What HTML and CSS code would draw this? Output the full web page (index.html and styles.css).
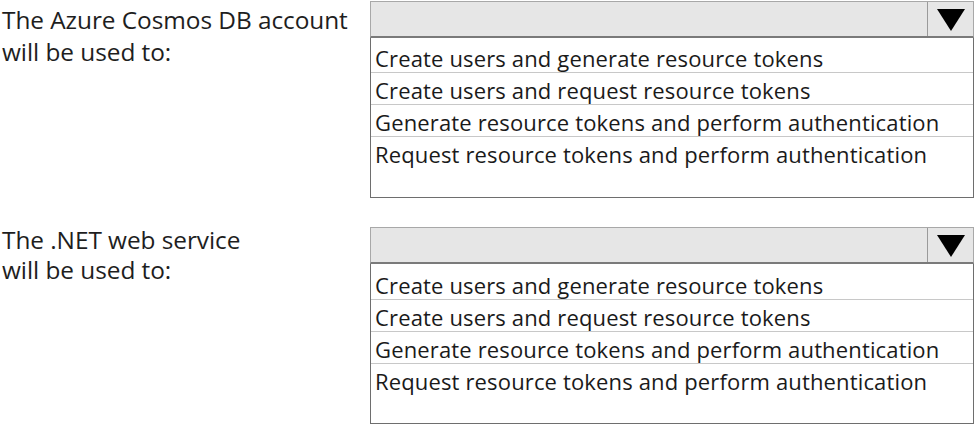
FILE: index.html
```html
<!DOCTYPE html>
<html>
<head>
<meta charset="utf-8">
<link rel="stylesheet" href="styles.css">
</head>
<body>
<div class="page">
  <section class="item first">
    <div class="label">The Azure Cosmos DB account<br>will be used to:</div>
    <div class="dropdown">
      <div class="head">
        <div class="value"></div>
        <div class="btn"><svg width="28" height="22" viewBox="0 0 28 22"><polygon points="0,0 28,0 14,22" fill="#000"/></svg></div>
      </div>
      <ul class="list">
        <li>Create users and generate resource tokens</li>
        <li>Create users and request resource tokens</li>
        <li>Generate resource tokens and perform authentication</li>
        <li class="last">Request resource tokens and perform authentication</li>
      </ul>
    </div>
  </section>
  <section class="item second">
    <div class="label">The .NET web service<br>will be used to:</div>
    <div class="dropdown">
      <div class="head">
        <div class="value"></div>
        <div class="btn"><svg width="28" height="22" viewBox="0 0 28 22"><polygon points="0,0 28,0 14,22" fill="#000"/></svg></div>
      </div>
      <ul class="list">
        <li>Create users and generate resource tokens</li>
        <li>Create users and request resource tokens</li>
        <li>Generate resource tokens and perform authentication</li>
        <li class="last">Request resource tokens and perform authentication</li>
      </ul>
    </div>
  </section>
</div>
</body>
</html>
```

FILE: styles.css
```css
* { box-sizing: border-box; }
html, body { margin: 0; padding: 0; background: #fff; }
body {
  font-family: "Open Sans", "Noto Sans", sans-serif;
  color: #222;
  width: 975px;
  height: 426px;
  overflow: hidden;
}
.page { display: flex; flex-direction: column; }
.item { display: flex; }
.first { padding-top: 1px; }
.second { margin-top: 29px; }
.label {
  width: 370px;
  padding-left: 2px;
  font-size: 24.4px;
  line-height: 32px;
  padding-top: 3px;
  color: #1e1e1e;
  letter-spacing: -0.05px;
}
.second .label { padding-top: 0; margin-top: -2px; line-height: 30px; }
.dropdown { width: 604px; display: flex; flex-direction: column; }
.head {
  height: 37px;
  display: flex;
  background: #e6e6e6;
  border: 1px solid #a8a8a8;
  border-bottom: 2px solid #7a7a7a;
}
.value { flex: 1; }
.btn {
  width: 46px;
  border-left: 1px solid #9a9a9a;
  display: flex;
  align-items: center;
  justify-content: center;
  padding-top: 2px;
}
.list {
  list-style: none;
  margin: 0;
  padding: 3px 0 0 0;
  height: 160px;
  border: 1px solid #6e6e6e;
  border-top: none;
}
.second .list { padding-top: 4px; }
.list li {
  height: 32px;
  line-height: 30px;
  padding-top: 2px;
  padding-left: 4px;
  font-size: 22px;
  letter-spacing: 0.15px;
  border-bottom: 1px solid #c8c8c8;
  color: #1a1a1a;
  white-space: nowrap;
}
.list li.last { border-bottom: none; }
```
